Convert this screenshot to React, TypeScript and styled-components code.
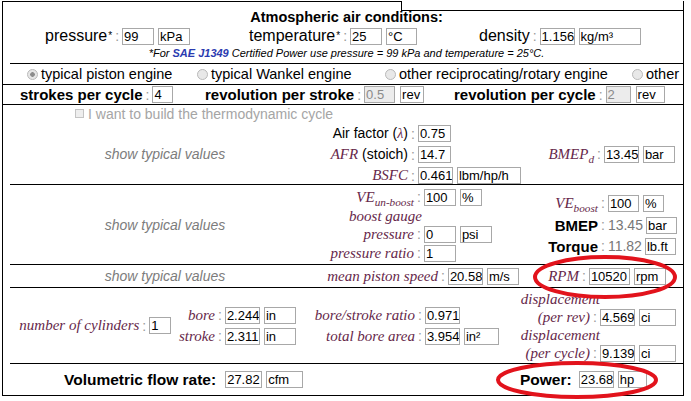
import React from "react";
import styled, { createGlobalStyle } from "styled-components";

const GlobalStyle = createGlobalStyle`
  * { box-sizing: border-box; }
  html, body { margin: 0; padding: 0; background: #fff; }
  body { font-family: "Liberation Sans", Arial, sans-serif; color: #000; font-size: 14px; }
`;

const Page = styled.div`
  position: relative;
  width: 691px;
  height: 401px;
  overflow: hidden;
  padding: 1px 0 0 2px;
`;

const Frame = styled.div`
  width: 682px;
  border-left: 1px solid #000;
  border-bottom: 1px solid #000;
`;

const TopStrip = styled.div`
  display: flex;
  height: 10px;
`;

const StripLeft = styled.div`
  width: 398px;
  border-top: 1px solid #000;
`;

const StripRight = styled.div`
  flex: 1;
  border-left: 1px solid #000;
  border-right: 1px solid #000;
  border-bottom: 1px solid #000;
`;

const Body = styled.div`
  border-right: 1px solid #000;
`;

const Section = styled.div<{ $inset?: boolean; $h: number; $last?: boolean }>`
  margin-left: ${({ $inset }) => ($inset ? 7 : 0)}px;
  height: ${({ $h }) => $h}px;
  border-bottom: ${({ $last }) => ($last ? "none" : "1px solid #000")};
`;

const Atmos = styled(Section)`
  display: flex;
  flex-direction: column;
`;

const Title = styled.div`
  margin-top: -2px;
  text-align: center;
  font-weight: 700;
  font-size: 14.5px;
  line-height: 16px;
`;

const Row = styled.div<{ $cols: string; $pad?: number; $h?: number }>`
  display: grid;
  grid-template-columns: ${({ $cols }) => $cols};
  align-items: center;
  padding-left: ${({ $pad }) => $pad || 0}px;
  height: ${({ $h }) => ($h ? `${$h}px` : "100%")};
`;

const Note = styled.div`
  text-align: center;
  font-style: italic;
  font-size: 11px;
  line-height: 13px;
`;

const Link = styled.span`
  color: #2b3bb0;
  font-weight: 700;
`;

const Field = styled.span`
  display: inline-flex;
  align-items: center;
  white-space: nowrap;
`;

const Text = styled.span<{ $size?: number; $bold?: boolean; $color?: string }>`
  font-size: ${({ $size }) => $size || 14}px;
  font-weight: ${({ $bold }) => ($bold ? 700 : 400)};
  color: ${({ $color }) => $color || "#000"};
`;

const Star = styled.sup`
  font-size: 10px;
  line-height: 0;
  margin-left: 1px;
`;

const MathText = styled.span<{ $size?: number }>`
  font-family: "Liberation Serif", "Times New Roman", serif;
  font-style: italic;
  font-size: ${({ $size }) => $size || 15}px;
  color: #66284a;
`;

const Sub = styled.sub`
  font-size: 0.75em;
  line-height: 0;
`;

const Colon = styled.span`
  color: #9a9a9a;
  margin: 0 3px 0 3px;
  font-size: 14px;
`;

const Gap = styled.span<{ $w: number }>`
  display: inline-block;
  width: ${({ $w }) => $w}px;
`;

const Box = styled.span<{ $w: number; $off?: boolean }>`
  display: inline-block;
  width: ${({ $w }) => $w}px;
  height: 17px;
  line-height: 15px;
  border: 1px solid #a8a8a8;
  padding: 0 0 0 1px;
  font-size: 13px;
  color: ${({ $off }) => ($off ? "#8a8a8a" : "#000")};
  background: ${({ $off }) => ($off ? "#ececec" : "#fff")};
  margin-right: ${({ $off }) => ($off ? 5 : 4)}px;
  overflow: hidden;
  white-space: nowrap;
`;

const Radio = styled.span<{ $on?: boolean }>`
  display: inline-block;
  width: 11px;
  height: 11px;
  border-radius: 50%;
  border: 1px solid #b9b9b9;
  background: ${({ $on }) =>
    $on ? "radial-gradient(circle, #8c8c8c 0 2px, #e6e6e6 2.6px)" : "#e8e8e8"};
  margin-right: 3px;
`;

const Check = styled.span`
  display: inline-block;
  width: 9px;
  height: 9px;
  border: 1px solid #c4c4c4;
  background: #eeeeee;
  margin-right: 4px;
`;

const CheckRow = styled.div`
  height: 17px;
  display: flex;
  align-items: center;
  padding-left: 72px;
  font-size: 14px;
  color: #a5a5a5;
`;

const Grid = styled.div<{ $cols: string }>`
  display: grid;
  grid-template-columns: ${({ $cols }) => $cols};
  height: 100%;
`;

const Hint = styled.div`
  display: flex;
  align-items: center;
  justify-content: center;
  font-style: italic;
  font-size: 14px;
  color: #7c7c7c;
`;

const Stack = styled.div<{ $top?: number; $center?: boolean; $pad?: number }>`
  display: flex;
  flex-direction: column;
  justify-content: ${({ $center }) => ($center ? "center" : "flex-start")};
  padding-top: ${({ $top }) => $top || 0}px;
  padding-left: ${({ $pad }) => $pad || 0}px;
`;

const Line = styled.div<{ $h: number }>`
  display: flex;
  align-items: center;
  height: ${({ $h }) => $h}px;
  white-space: nowrap;
`;

const LabelCell = styled.span<{ $w: number }>`
  display: inline-block;
  width: ${({ $w }) => $w}px;
  text-align: right;
  white-space: nowrap;
`;

const Value = styled.span`
  color: #777;
  font-size: 14px;
  margin-right: 3px;
`;

const Overlay = styled.svg`
  position: absolute;
  left: 0;
  top: 0;
  pointer-events: none;
`;

const Ring = styled.ellipse`
  fill: none;
  stroke: #e2131c;
  stroke-width: 4;
`;

const MField = ({
  w,
  label,
  children,
}: {
  w: number;
  label: React.ReactNode;
  children: React.ReactNode;
}) => (
  <Field>
    <LabelCell $w={w}>{label}</LabelCell>
    <Colon>:</Colon>
    {children}
  </Field>
);

export default function App() {
  return (
    <Page>
      <GlobalStyle />
      <Frame>
        <TopStrip>
          <StripLeft />
          <StripRight />
        </TopStrip>
        <Body>
          <Atmos $inset $h={53}>
            <Title>Atmospheric air conditions:</Title>
            <Row $cols="204px 230px auto" $pad={35} $h={22}>
              <Field>
                <Text $size={16}>pressure</Text>
                <Star>*</Star>
                <Colon>:</Colon>
                <Box $w={32}>99</Box>
                <Box $w={32}>kPa</Box>
              </Field>
              <Field>
                <Text $size={16}>temperature</Text>
                <Star>*</Star>
                <Colon>:</Colon>
                <Box $w={32}>25</Box>
                <Box $w={31}>°C</Box>
              </Field>
              <Field>
                <Text $size={16}>density</Text>
                <Colon>:</Colon>
                <Box $w={35}>1.156</Box>
                <Box $w={62}>kg/m³</Box>
              </Field>
            </Row>
            <Note>
              *For <Link>SAE J1349</Link> Certified Power use pressure = 99 kPa and temperature = 25°C.
            </Note>
          </Atmos>

          <Section $h={21}>
            <Row $cols="170px 188px 247px auto" $pad={24}>
              <Field>
                <Radio $on />
                <Text $size={14.5}>typical piston engine</Text>
              </Field>
              <Field>
                <Radio />
                <Text $size={14.5}>typical Wankel engine</Text>
              </Field>
              <Field>
                <Radio />
                <Text $size={14.5}>other reciprocating/rotary engine</Text>
              </Field>
              <Field>
                <Radio />
                <Text $size={14.5}>other</Text>
              </Field>
            </Row>
          </Section>

          <Section $h={20}>
            <Row $cols="185px 249px auto" $pad={17}>
              <Field>
                <Text $size={15} $bold>strokes per cycle</Text>
                <Colon>:</Colon>
                <Box $w={21}>4</Box>
              </Field>
              <Field>
                <Text $size={15} $bold>revolution per stroke</Text>
                <Colon>:</Colon>
                <Box $w={31} $off>0.5</Box>
                <Box $w={24}>rev</Box>
              </Field>
              <Field>
                <Text $size={15} $bold>revolution per cycle</Text>
                <Colon>:</Colon>
                <Box $w={25} $off>2</Box>
                <Box $w={29}>rev</Box>
              </Field>
            </Row>
          </Section>

          <CheckRow>
            <Check />I want to build the thermodynamic cycle
          </CheckRow>

          <Section $inset $h={63}>
            <Grid $cols="310px 210px 1fr">
              <Hint>show typical values</Hint>
              <Stack $top={1}>
                <Line $h={21}>
                  <MField w={88} label={<Text>Air factor (<MathText $size={14}>λ</MathText>)</Text>}>
                    <Box $w={33}>0.75</Box>
                  </MField>
                </Line>
                <Line $h={21}>
                  <MField
                    w={88}
                    label={
                      <>
                        <MathText>AFR</MathText> <Text>(stoich)</Text>
                      </>
                    }
                  >
                    <Box $w={33}>14.7</Box>
                  </MField>
                </Line>
                <Line $h={21}>
                  <MField w={88} label={<MathText>BSFC</MathText>}>
                    <Box $w={35}>0.461</Box>
                    <Box $w={64}>lbm/hp/h</Box>
                  </MField>
                </Line>
              </Stack>
              <Stack $center>
                <Line $h={21}>
                  <MField
                    w={64}
                    label={
                      <MathText>
                        BMEP<Sub>d</Sub>
                      </MathText>
                    }
                  >
                    <Box $w={35}>13.45</Box>
                    <Box $w={32}>bar</Box>
                  </MField>
                </Line>
              </Stack>
            </Grid>
          </Section>

          <Section $inset $h={80}>
            <Grid $cols="310px 210px 1fr">
              <Hint>show typical values</Hint>
              <Stack $top={2}>
                <Line $h={20}>
                  <MField
                    w={94}
                    label={
                      <MathText>
                        VE<Sub>un-boost</Sub>
                      </MathText>
                    }
                  >
                    <Box $w={32}>100</Box>
                    <Box $w={22}>%</Box>
                  </MField>
                </Line>
                <Line $h={18}>
                  <LabelCell $w={102}>
                    <MathText>boost gauge</MathText>
                  </LabelCell>
                </Line>
                <Line $h={18}>
                  <MField w={94} label={<MathText>pressure</MathText>}>
                    <Box $w={32}>0</Box>
                    <Box $w={32}>psi</Box>
                  </MField>
                </Line>
                <Line $h={20}>
                  <MField w={94} label={<MathText>pressure ratio</MathText>}>
                    <Box $w={32}>1</Box>
                  </MField>
                </Line>
              </Stack>
              <Stack $top={7}>
                <Line $h={22}>
                  <MField
                    w={68}
                    label={
                      <MathText>
                        VE<Sub>boost</Sub>
                      </MathText>
                    }
                  >
                    <Box $w={31}>100</Box>
                    <Box $w={21}>%</Box>
                  </MField>
                </Line>
                <Line $h={22}>
                  <MField w={68} label={<Text $size={15} $bold>BMEP</Text>}>
                    <Value>13.45</Value>
                    <Box $w={31}>bar</Box>
                  </MField>
                </Line>
                <Line $h={20}>
                  <MField w={68} label={<Text $size={15} $bold>Torque</Text>}>
                    <Value>11.82</Value>
                    <Box $w={31}>lb.ft</Box>
                  </MField>
                </Line>
              </Stack>
            </Grid>
          </Section>

          <Section $inset $h={23}>
            <Grid $cols="310px 206px 1fr">
              <Hint>show typical values</Hint>
              <Stack $center>
                <MField w={118} label={<MathText>mean piston speed</MathText>}>
                  <Box $w={35}>20.58</Box>
                  <Box $w={32}>m/s</Box>
                </MField>
              </Stack>
              <Stack $center>
                <MField w={53} label={<MathText>RPM</MathText>}>
                  <Box $w={41}>10520</Box>
                  <Box $w={32}>rpm</Box>
                </MField>
              </Stack>
            </Grid>
          </Section>

          <Section $inset $h={76}>
            <Grid $cols="165px 135px 190px 1fr">
              <Stack $center>
                <MField w={131} label={<MathText>number of cylinders</MathText>}>
                  <Box $w={22}>1</Box>
                </MField>
              </Stack>
              <Stack $center>
                <Line $h={21}>
                  <MField w={40} label={<MathText>bore</MathText>}>
                    <Box $w={35}>2.244</Box>
                    <Box $w={32}>in</Box>
                  </MField>
                </Line>
                <Line $h={21}>
                  <MField w={40} label={<MathText>stroke</MathText>}>
                    <Box $w={35}>2.311</Box>
                    <Box $w={32}>in</Box>
                  </MField>
                </Line>
              </Stack>
              <Stack $center>
                <Line $h={21}>
                  <MField w={105} label={<MathText>bore/stroke ratio</MathText>}>
                    <Box $w={35}>0.971</Box>
                  </MField>
                </Line>
                <Line $h={21}>
                  <MField w={105} label={<MathText>total bore area</MathText>}>
                    <Box $w={35}>3.954</Box>
                    <Box $w={35}>in²</Box>
                  </MField>
                </Line>
              </Stack>
              <Stack $top={2}>
                <Line $h={18}>
                  <LabelCell $w={100}>
                    <MathText>displacement</MathText>
                  </LabelCell>
                </Line>
                <Line $h={18}>
                  <MField w={90} label={<MathText>(per rev)</MathText>}>
                    <Box $w={35}>4.569</Box>
                    <Box $w={37}>ci</Box>
                  </MField>
                </Line>
                <Line $h={18}>
                  <LabelCell $w={100}>
                    <MathText>displacement</MathText>
                  </LabelCell>
                </Line>
                <Line $h={18}>
                  <MField w={90} label={<MathText>(per cycle)</MathText>}>
                    <Box $w={35}>9.139</Box>
                    <Box $w={37}>ci</Box>
                  </MField>
                </Line>
              </Stack>
            </Grid>
          </Section>

          <Section $inset $h={31} $last>
            <Row $cols="454px auto">
              <Stack $pad={54}>
                <Field>
                  <Text $size={15.5} $bold>Volumetric flow rate:</Text>
                  <Gap $w={9} />
                  <Box $w={37}>27.82</Box>
                  <Box $w={37}>cfm</Box>
                </Field>
              </Stack>
              <Stack $pad={56}>
                <Field>
                  <Text $size={15.5} $bold>Power:</Text>
                  <Gap $w={7} />
                  <Box $w={35}>23.68</Box>
                  <Box $w={29}>hp</Box>
                </Field>
              </Stack>
            </Row>
          </Section>
        </Body>
      </Frame>
      <Overlay width={691} height={401} viewBox="0 0 691 401">
        <Ring cx={605} cy={277} rx={70} ry={20} />
        <Ring cx={577} cy={380} rx={79} ry={17} />
      </Overlay>
    </Page>
  );
}
